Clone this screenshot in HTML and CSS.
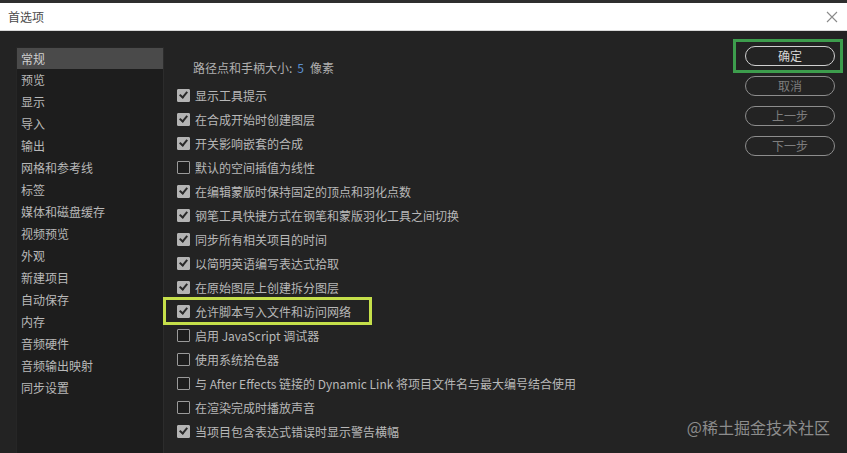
FILE: index.html
```html
<!DOCTYPE html>
<html lang="zh">
<head>
<meta charset="utf-8">
<link rel="stylesheet" href="styles.css">
</head>
<body>
<div class="topline"></div>
<header class="titlebar">
  <span class="title">首选项</span>
  <svg class="close" width="12" height="12" viewBox="0 0 12 12"><path d="M1 1L11 11M11 1L1 11" stroke="#8a8a8a" stroke-width="1.1" fill="none"/></svg>
</header>
<main class="dialog">
  <nav class="sidebar">
    <div class="nav-item active">常规</div>
    <div class="nav-item">预览</div>
    <div class="nav-item">显示</div>
    <div class="nav-item">导入</div>
    <div class="nav-item">输出</div>
    <div class="nav-item">网格和参考线</div>
    <div class="nav-item">标签</div>
    <div class="nav-item">媒体和磁盘缓存</div>
    <div class="nav-item">视频预览</div>
    <div class="nav-item">外观</div>
    <div class="nav-item">新建项目</div>
    <div class="nav-item">自动保存</div>
    <div class="nav-item">内存</div>
    <div class="nav-item">音频硬件</div>
    <div class="nav-item">音频输出映射</div>
    <div class="nav-item">同步设置</div>
  </nav>
  <section class="content">
    <div class="size-row">路径点和手柄大小:<span class="num">5</span>像素</div>
    <div class="opt"><span class="cb on"></span>显示工具提示</div>
    <div class="opt"><span class="cb on"></span>在合成开始时创建图层</div>
    <div class="opt"><span class="cb on"></span>开关影响嵌套的合成</div>
    <div class="opt"><span class="cb"></span>默认的空间插值为线性</div>
    <div class="opt"><span class="cb on"></span>在编辑蒙版时保持固定的顶点和羽化点数</div>
    <div class="opt"><span class="cb on"></span>钢笔工具快捷方式在钢笔和蒙版羽化工具之间切换</div>
    <div class="opt"><span class="cb on"></span>同步所有相关项目的时间</div>
    <div class="opt"><span class="cb on"></span>以简明英语编写表达式拾取</div>
    <div class="opt"><span class="cb on"></span>在原始图层上创建拆分图层</div>
    <div class="opt highlight"><span class="cb on"></span>允许脚本写入文件和访问网络</div>
    <div class="opt"><span class="cb"></span>启用 JavaScript 调试器</div>
    <div class="opt"><span class="cb"></span>使用系统拾色器</div>
    <div class="opt"><span class="cb"></span>与 After Effects 链接的 Dynamic Link 将项目文件名与最大编号结合使用</div>
    <div class="opt"><span class="cb"></span>在渲染完成时播放声音</div>
    <div class="opt"><span class="cb on"></span>当项目包含表达式错误时显示警告横幅</div>
  </section>
  <aside class="buttons">
    <button class="btn primary">确定</button>
    <button class="btn">取消</button>
    <button class="btn">上一步</button>
    <button class="btn">下一步</button>
  </aside>
  <div class="watermark">@稀土掘金技术社区</div>
</main>
</body>
</html>
```

FILE: styles.css
```css
*, *::before, *::after { box-sizing: border-box; }
html, body {
  margin: 0;
  padding: 0;
  width: 847px;
  height: 453px;
  overflow: hidden;
  background: #232323;
  font-family: "Noto Sans CJK SC", "Noto Sans", sans-serif;
}
.topline {
  height: 3px;
  background: #2e2e2e;
}
.titlebar {
  height: 28px;
  background: #ffffff;
  display: flex;
  align-items: center;
  justify-content: space-between;
  padding: 0 8px 0 8px;
  border-bottom: 1px solid #d8d8d8;
}
.title {
  font-size: 12px;
  color: #4a4a4a;
}
.close { margin-right: 1px; }
.dialog {
  position: relative;
  height: 422px;
  display: flex;
  align-items: flex-start;
  background: #232323;
}
.sidebar {
  margin: 16px 0 0 16px;
  width: 148px;
  height: 420px;
  background: #1d1d1d;
  border: 1px solid #262626;
  border-right: 1px solid #2c2c2c;
}
.nav-item {
  height: 22px;
  line-height: 22px;
  padding-left: 4px;
  font-size: 12px;
  color: #b8b8b8;
  white-space: nowrap;
}
.nav-item.active {
  background: #4a4a4a;
  height: 21px;
  line-height: 21px;
  color: #cfcfcf;
}
.content {
  position: relative;
  flex: 1;
  padding: 26px 0 0 13px;
}
.size-row {
  height: 26px;
  line-height: 22px;
  padding-left: 16px;
  font-size: 12px;
  color: #b0b0b0;
}
.size-row .num {
  color: #5a8fd0;
  margin: 0 6px 0 5px;
}
.opt {
  display: flex;
  align-items: center;
  height: 24px;
  font-size: 12px;
  color: #b8b8b8;
  white-space: nowrap;
}
.cb {
  width: 13px;
  height: 13px;
  margin-right: 5px;
  border: 1.5px solid #9a9a9a;
  border-radius: 1px;
  background: #1d1d1d;
  flex: none;
  position: relative;
}
.cb.on {
  background: #b4b4b4;
  border-color: #b4b4b4;
}
.cb.on::after {
  content: "";
  position: absolute;
  left: 3px;
  top: 0px;
  width: 5px;
  height: 8px;
  border-right: 2px solid #2a2a2a;
  border-bottom: 2px solid #2a2a2a;
  transform: rotate(40deg);
}
.opt.highlight { position: relative; }
.opt.highlight::before {
  content: "";
  position: absolute;
  left: -14px;
  top: -2px;
  width: 209px;
  height: 28px;
  border: 3px solid #c5df4a;
}
.buttons {
  display: flex;
  flex-direction: column;
  gap: 10px;
  margin: 15px 12px 0 0;
  position: relative;
}
.btn {
  width: 90px;
  height: 20px;
  border-radius: 10px;
  border: 1.5px solid #8d8d8d;
  background: #232323;
  color: #7e7e7e;
  font-family: "Noto Sans CJK SC", sans-serif;
  font-size: 12px;
  line-height: 16px;
  padding: 0;
}
.btn.primary {
  color: #d6d6d6;
  border-color: #d0d0d0;
  position: relative;
}
.btn.primary::before {
  content: "";
  position: absolute;
  left: -13px;
  top: -8px;
  width: 110px;
  height: 34px;
  border: 3px solid #3d9d4d;
}
.watermark {
  position: absolute;
  right: 17px;
  bottom: 14px;
  font-size: 16px;
  color: #8c8c8c;
}
```
